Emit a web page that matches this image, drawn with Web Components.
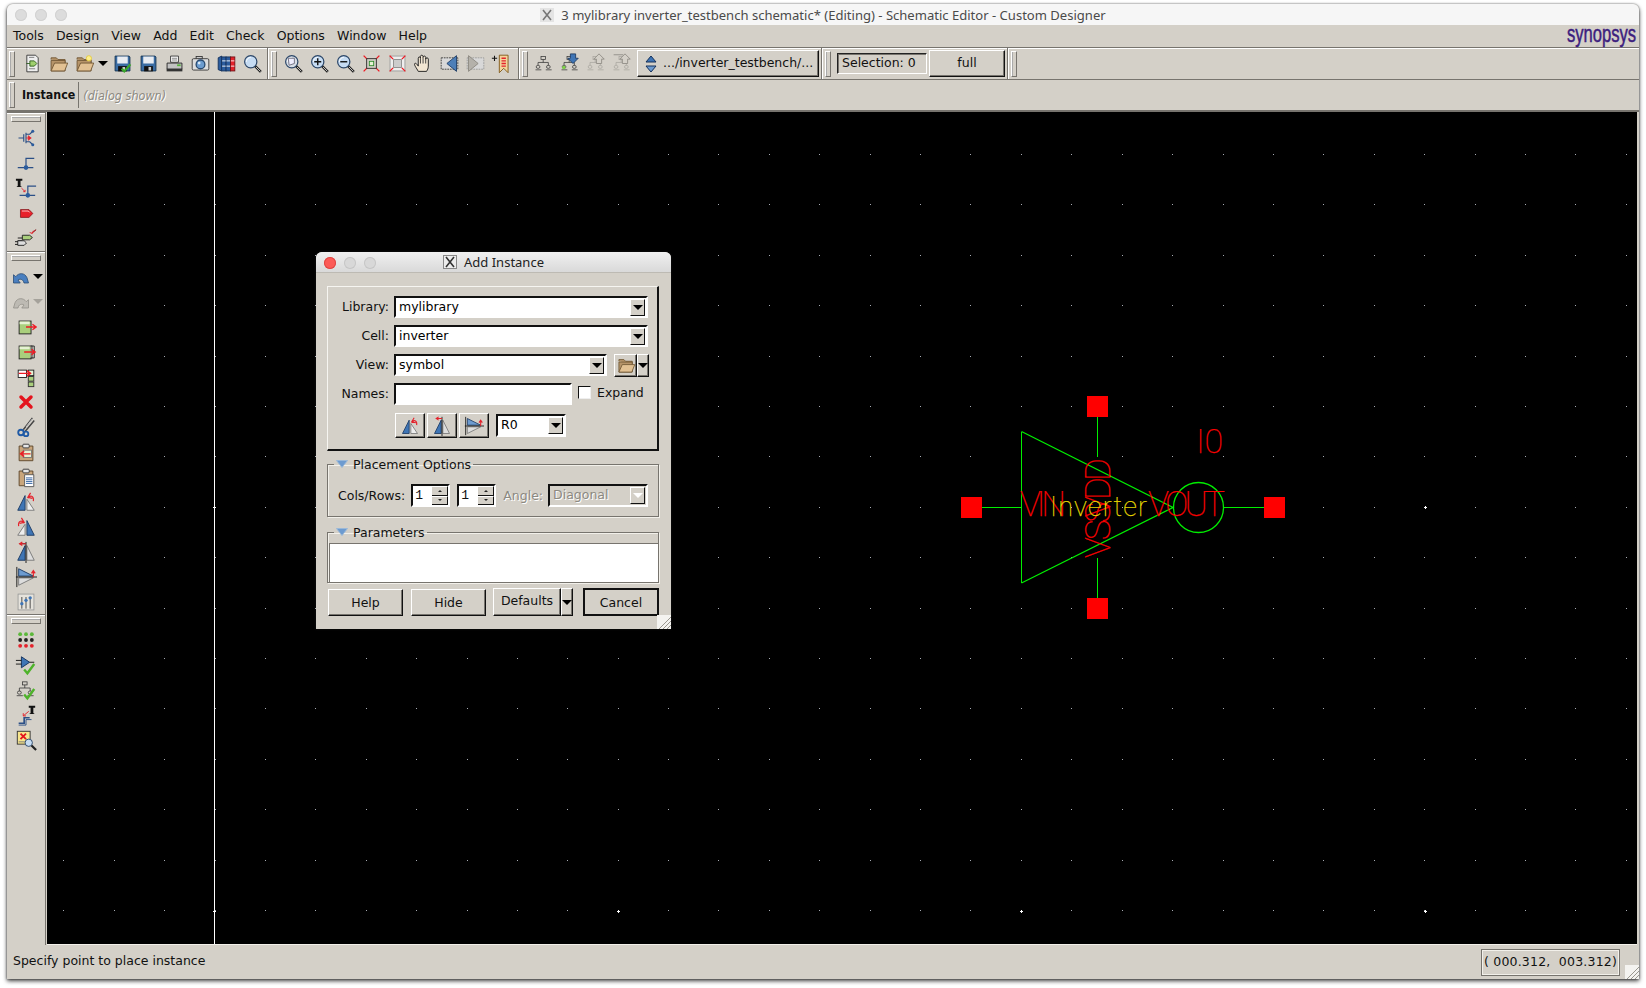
<!DOCTYPE html>
<html>
<head>
<meta charset="utf-8">
<title>Schematic Editor</title>
<style>
  html, body { margin: 0; padding: 0; background: #fff; }
  body { box-sizing: border-box; width: 1646px; height: 988px; padding: 4px 7px 9px; overflow: hidden; }
</style>
</head>
<body>
<eda-window>
  <title-bar>3 mylibrary inverter_testbench schematic* (Editing) - Schematic Editor - Custom Designer</title-bar>
  <menu-bar items="Tools,Design,View,Add,Edit,Check,Options,Window,Help"></menu-bar>
  <tool-bar>
    <tool-handle style="margin:0 4px 0 2px"></tool-handle>
    <tool-icon name="plugdoc"></tool-icon>
    <tool-icon name="folder"></tool-icon>
    <tool-icon name="folderstar"></tool-icon>
    <drop-arrow style="width:12px"></drop-arrow>
    <tool-icon name="savecheck"></tool-icon>
    <tool-icon name="save"></tool-icon>
    <tool-icon name="print"></tool-icon>
    <tool-icon name="camera"></tool-icon>
    <tool-icon name="books"></tool-icon>
    <tool-icon name="find"></tool-icon>
    <tool-split style="margin:0 3px 0 2px"></tool-split>
    <tool-icon name="zoombox"></tool-icon>
    <tool-icon name="zoomin"></tool-icon>
    <tool-icon name="zoomout"></tool-icon>
    <tool-icon name="fit"></tool-icon>
    <tool-icon name="fitred"></tool-icon>
    <tool-icon name="hand"></tool-icon>
    <tool-icon name="back"></tool-icon>
    <tool-icon name="forward"></tool-icon>
    <tool-icon name="bookmark"></tool-icon>
    <tool-split style="margin:0 2px 0 4px"></tool-split>
    <tool-icon name="tree"></tool-icon>
    <tool-icon name="treedown"></tool-icon>
    <tool-icon name="treeup"></tool-icon>
    <tool-icon name="treetop"></tool-icon>
    <hier-combo style="margin-left:3px">.../inverter_testbench/...</hier-combo>
    <tool-split style="margin:0 6px 0 2px"></tool-split>
    <sel-box>Selection: 0</sel-box>
    <flat-button style="width:76px;height:27px;margin-left:2px;padding-bottom:2px">full</flat-button>
    <tool-split style="margin-left:2px"></tool-split>
  </tool-bar>
  <command-bar name="Instance" hint="(dialog shown)"></command-bar>
  <work-area>
    <side-bar slot="side">
      <side-section>
        <tool-icon row name="mos" size="18"></tool-icon>
        <tool-icon row name="wire"></tool-icon>
        <tool-icon row name="wirename"></tool-icon>
        <tool-icon row name="pin" size="17"></tool-icon>
        <tool-icon row name="plugs"></tool-icon>
      </side-section>
      <side-section>
        <side-drop name="undo"></side-drop>
        <side-drop name="redo" disabled></side-drop>
        <tool-icon row name="movein"></tool-icon>
        <tool-icon row name="moveedge"></tool-icon>
        <tool-icon row name="movegroup"></tool-icon>
        <tool-icon row name="del" size="20"></tool-icon>
        <tool-icon row name="cut"></tool-icon>
        <tool-icon row name="pastein"></tool-icon>
        <tool-icon row name="paste"></tool-icon>
        <tool-icon row name="rotl"></tool-icon>
        <tool-icon row name="rotr"></tool-icon>
        <tool-icon row name="flipv"></tool-icon>
        <tool-icon row name="fliph"></tool-icon>
        <tool-icon row name="props" size="20"></tool-icon>
      </side-section>
      <side-section>
        <tool-icon row name="array" size="20"></tool-icon>
        <tool-icon row name="checkplug"></tool-icon>
        <tool-icon row name="checktree"></tool-icon>
        <tool-icon row name="stepname"></tool-icon>
        <tool-icon row name="errorfind"></tool-icon>
      </side-section>
    </side-bar>
    <schematic-canvas>
      <add-instance-dialog></add-instance-dialog>
    </schematic-canvas>
  </work-area>
  <status-bar coords="( 000.312,&#160; 003.312)">Specify point to place instance</status-bar>
</eda-window>

<script>
const BG = '#d4d0c8';
const FONT = '"DejaVu Sans", Verdana, sans-serif';

// small drawing helpers for the icon table
const glass = (extra = '', fill = '#c6dcf3') => `
  <line x1="15" y1="15" x2="21.5" y2="21.5" stroke="#222" stroke-width="3"/>
  <line x1="16" y1="16" x2="21" y2="21" stroke="#d8d8d8" stroke-width="1"/>
  <circle cx="10" cy="10" r="7" fill="${fill}" stroke="#2b4668" stroke-width="1.4"/>
  <path d="M5 10a5 5 0 0 1 5-5" stroke="#fff" fill="none"/>${extra}`;
const floppy = (extra = '') => `
  <path d="M3.5 3.5h16l1 1v16h-17z" fill="#3a6ca3" stroke="#16324f"/>
  <rect x="6" y="4" width="12" height="8" fill="#e8ecf2"/>
  <rect x="7" y="15" width="10" height="6" fill="#111"/>
  <rect x="12" y="16" width="3" height="4" fill="#c8c8c8"/>${extra}`;
const folder = (extra = '') => `
  <path d="M3.5 7.5v-2h6l2 2h8v4" fill="#b69469" stroke="#6f5532"/>
  <path d="M3.5 20.5v-12h16v12z" fill="#b69469" stroke="#6f5532"/>
  <path d="M7.5 11.5h15l-3.500 9h-15.500z" fill="#e2c193" stroke="#6f5532"/>${extra}`;
const tree = (c, extra = '') => `
  <g transform="translate(2 2) scale(.84)" fill="none" stroke="${c}">
    <rect x="8.500" y="2.500" width="6" height="4"/>
    <path d="M11.500 6.500v4M4.500 14.500v-4h14v4"/>
    <rect x="2" y="14.500" width="5" height="4" rx="2"/>
    <rect x="16" y="14.500" width="5" height="4" rx="2"/>
    <path d="M1 20.500h8M15 20.500h8"/>
  </g>${extra}`;
const tri = (l, r) => `
  <path d="M11 5 L3 21 H11z" fill="${l}" stroke="#1c3a63"/>
  <path d="M13 9 V21 H21z" fill="${r}" stroke="#777"/>`;
const box = (x, y, w, h) => `
  <rect x="${x}.500" y="${y}.500" width="${w}" height="${h}" fill="#a9cf7c" stroke="#222"/>
  <rect x="${x + 1}" y="${y + 1}" width="${w - 2}" height="3" fill="#e6f2d4"/>`;
const redArrow = (x1, y, x2) => {
  const d = x2 > x1 ? -4 : 4;
  return `<path d="M${x1} ${y}H${x2}M${x2 + d} ${y - 3}L${x2} ${y}L${x2 + d} ${y + 3}" fill="none" stroke="#ee1c25" stroke-width="1.500"/>`;
};
const corners = `<g stroke="#ee1c25" stroke-width="1.600" fill="none">
  <path d="M3 3l4 4M21 3l-4 4M3 21l4-4M21 21l-4-4"/></g>`;
const check = `<path d="M10 17l3.500 4L21 11" fill="none" stroke="#4eb32a" stroke-width="2.600"/>`;
const clip = `
  <path d="M4.500 5.500h15v16h-15z" fill="#c9a67c" stroke="#5b4428"/>
  <rect x="8.500" y="3.500" width="7" height="4" rx="1" fill="#e6e6e6" stroke="#333"/>`;
const T = `<path d="M15 2h7v2h-2v6h1v1h-5v-1h1V4h-2z" fill="#111"/>`;
const wire = (dy = 0, dx = 0) => `<g transform="translate(${dx} ${dy})">
  <path d="M3 16H20M12 16V6H21" fill="none" stroke="#2b4f86" stroke-width="1.300"/>
  <circle cx="12" cy="16" r="2.500" fill="#2b5c9e"/></g>`;

const ICONS = {
  plugdoc: `<path d="M5.500 2.500h10l3 3v16h-13z" fill="#eee" stroke="#333"/>
    <path d="M5 12h4v-3h5l3 3-3 3H9v-3" fill="#9fd06e" stroke="#2c5c1c"/><path d="M8 5h6M8 18h7" stroke="#777"/>`,
  folder: folder(),
  folderstar: folder(`<circle cx="17" cy="6" r="3" fill="#ffef8a" stroke="#e2c93f"/>`),
  savecheck: floppy(`<path d="M11 18l3 3 7-8" fill="none" stroke="#39a72a" stroke-width="2.600"/>`),
  save: floppy(),
  print: `<path d="M7.500 3.500h9v7h-9z" fill="#fff" stroke="#333"/><path d="M9 6h6M9 8h6" stroke="#777"/>
    <path d="M3.500 11.500h17v7h-17z" fill="#c2c2c2" stroke="#222"/>
    <rect x="3" y="18" width="18" height="3" fill="#333"/><rect x="15" y="13" width="4" height="2" fill="#55b33a"/>`,
  camera: `<rect x="7" y="4" width="7" height="3" fill="#ccc" stroke="#333"/>
    <rect x="2.500" y="6.500" width="19" height="13" rx="1.500" fill="#ddd" stroke="#333"/>
    <circle cx="12" cy="13" r="5" fill="#6c9ccf" stroke="#28496f" stroke-width="1.500"/><circle cx="10.500" cy="11.500" r="1.500" fill="#dbeaf8"/>`,
  books: `<path d="M2.500 5.500l4-2v17l-4-1.500z" fill="#2b5c9e" stroke="#14305a"/>
    <rect x="6.500" y="4.500" width="5" height="16" fill="#2b5c9e" stroke="#14305a"/>
    <rect x="11.500" y="4.500" width="5" height="16" fill="#2b5c9e" stroke="#14305a"/>
    <rect x="16.500" y="4.500" width="5" height="16" fill="#e4222b" stroke="#701015"/>
    <path d="M7 9h4M7 15h4M12 9h4M12 15h4M17 9h4M17 15h4" stroke="#fff"/>`,
  find: glass(),
  zoombox: glass(`<path d="M6 6h7v6l-6 2z" fill="#eef" stroke="#667"/>`, '#d6dde6'),
  zoomin: glass(`<path d="M6 10h8M10 6v8" stroke="#111" stroke-width="1.600"/>`),
  zoomout: glass(`<path d="M6 10h8" stroke="#111" stroke-width="1.600"/>`),
  fit: `${corners}<rect x="6.500" y="6.500" width="11" height="11" fill="#d4d0c8" stroke="#222"/>
    <rect x="9.500" y="9.500" width="5" height="5" fill="#e6f2d4" stroke="#2a8a2a"/>`,
  fitred: `<rect x="3.500" y="3.500" width="17" height="17" fill="#eee" stroke="#999"/>${corners}
    <rect x="7.500" y="7.500" width="9" height="9" fill="#ccc" stroke="#888"/>`,
  hand: `<path d="M6 21c-2-4-5-7-4-9 1-1 3 1 4 3V6c0-2 2.500-2 2.500 0V4c0-2 3-2 3 0v1c0-2 3-2 3 0v2c0-2 3-2 3 0v8c0 3-1 4-2 6z"
    fill="#f2e6d2" stroke="#222" stroke-width="1.100"/><path d="M8.500 6v6M11.500 5v7M14.500 6v6" stroke="#333" fill="none"/>`,
  back: `<rect x="2.500" y="5.500" width="19" height="13" fill="#d8d8d8" stroke="#333" stroke-dasharray="2 1"/>
    <path d="M20 3v18L9 12z" fill="#4d7fb8" stroke="#1c3a63"/>`,
  forward: `<rect x="2.500" y="5.500" width="19" height="13" fill="#d8d8d8" stroke="#999" stroke-dasharray="2 1"/>
    <path d="M4 3v18l11-9z" fill="#b4b1aa" stroke="#8a877f"/>`,
  bookmark: `<path d="M1 6h6M4 3v6" stroke="#111" stroke-width="1.200"/>
    <path d="M9.500 2.500h10v20l-5-5-5 5z" fill="#f3d49b" stroke="#7a5414"/>
    <path d="M12 6h5M12 9h5M12 12h5M12 15h5" stroke="#e4222b" stroke-width="1.500"/>`,
  tree: tree('#333'),
  treedown: tree('#333', `<path d="M13 1h6v5h3l-6 6-6-6h3z" fill="#3f75b5" stroke="#1c3a63"/><rect x="3.500" y="14.500" width="4" height="4" rx="2" fill="#7ed04b"/>`),
  treeup: tree('#a8a59e', `<path d="M13 12h6V7h3l-6-6-6 6h3z" fill="#d4d0c8" stroke="#8f8c85"/>`),
  treetop: tree('#a8a59e', `<path d="M13 12h6V7h3l-6-6-6 6h3z" fill="#d4d0c8" stroke="#8f8c85"/><path d="M3 2h11" stroke="#8f8c85"/>`),
  mos: `<path d="M2 12h7M9 7v10M12 5v14M12 7h5l4-4M12 17h5l4 4" fill="none" stroke="#2b4f86" stroke-width="1.500"/>
    <path d="M12 12h5M15 9l4 3-4 3z" fill="#e4222b" stroke="#e4222b"/><circle cx="21" cy="3" r="2" fill="#2b5c9e"/><circle cx="21" cy="21" r="2" fill="#2b5c9e"/>`,
  wire: wire(1),
  wirename: `${wire(4, 2)}${T.replace('<path', '<path transform="translate(-14 0)"')}<path d="M7 12l4 4M9 16h2v-2" stroke="#e4222b" fill="none"/>`,
  pin: `<path d="M3.500 6.500h12l5.500 5.500-5.500 5.500h-12z" fill="#e8202a" stroke="#7a0f14"/><path d="M5.500 8.500h9l2 2" stroke="#fff" fill="none"/>`,
  plugs: `<path d="M8 9h8l3 2.500-3 2.500H8z" fill="#a9cf7c" stroke="#222"/><path d="M3 12h5M3 15h5M19 6l4-3" stroke="#111"/>
    <path d="M3 15h7l2.500 2.500L10 20H3z" fill="#ddd" stroke="#222"/><path d="M16 6l3 1 1-3M23 3l-5 4" stroke="#e4222b" fill="none"/><path d="M0 16h3M0 19h3" stroke="#111"/>`,
  undo: `<path d="M2 20V9l3 2.500C9 6 17 6 20 13l2 7h-6c-1-5-5-6-8-4l3 4z" fill="#4a7fbf" stroke="#23466f"/>`,
  redo: `<path d="M22 20V9l-3 2.500C15 6 7 6 4 13l-2 7h6c1-5 5-6 8-4l-3 4z" fill="#bdbab3" stroke="#8f8c85"/>`,
  movein: `${box(4, 5, 13, 14)}${redArrow(12, 12, 23)}`,
  moveedge: `${box(4, 5, 13, 14)}<path d="M18.500 5v14M17 5.500h4v13h-4" stroke="#222" fill="#d4d0c8"/>${redArrow(10, 12, 22)}`,
  movegroup: `<rect x="3.500" y="4.500" width="9" height="8" fill="#fff" stroke="#222"/><rect x="14.500" y="4.500" width="6" height="6" fill="#e6f2d4" stroke="#222"/>
    <rect x="14.500" y="11.500" width="6" height="5" fill="#a9cf7c" stroke="#333"/><rect x="14.500" y="17.500" width="6" height="5" fill="#a9cf7c" stroke="#333"/>${redArrow(4, 8, 17)}`,
  del: `<path d="M6 6l12 12M18 6L6 18" stroke="#e4141d" stroke-width="4.200" stroke-linecap="round"/>`,
  cut: `<path d="M19 2L9 15M21 5L11 17" stroke="#444" stroke-width="1.600"/><path d="M19 3l-7 9" stroke="#ccc"/>
    <circle cx="6.500" cy="18" r="3" fill="none" stroke="#1f5aa5" stroke-width="2"/><circle cx="12" cy="19.500" r="2.500" fill="none" stroke="#1f5aa5" stroke-width="2"/>`,
  pastein: `${clip}<rect x="9" y="10" width="9" height="8" fill="#e6f2d4" stroke="#777"/>${redArrow(17, 14, 6)}`,
  paste: `${clip}<path d="M10.500 9.500h10v13h-10z" fill="#fff" stroke="#555"/><path d="M12 13h7M12 15h7M12 17h7M12 19h7" stroke="#2b5c9e"/>`,
  rotl: `${tri('#3f75b5', '#eeeeee')}<path d="M14 8c2-4 7-3 6 3M17 2l-3 5 5 1" fill="none" stroke="#e4222b" stroke-width="1.300"/>`,
  rotr: `<g transform="matrix(-1 0 0 1 24 0)">${tri('#3f75b5', '#eeeeee')}</g><path d="M10 8C8 4 3 5 4 11M7 2l3 5-5 1" fill="none" stroke="#e4222b" stroke-width="1.300"/>`,
  flipv: `<path d="M11 5L3 21h8z" fill="#3f75b5" stroke="#1c3a63"/><path d="M13 5l8 16h-8z" fill="#ddd" stroke="#777"/>
    <path d="M12 1v23M12 3H5" stroke="#111"/><path d="M5 3h7M8 1L5 3l3 2" fill="none" stroke="#e4222b" stroke-width="1.300"/>`,
  fliph: `<path d="M4 3l16 8H4z" fill="#6d9bd0" stroke="#1c3a63"/><path d="M4 13h16L4 21z" fill="#ddd" stroke="#777"/>
    <path d="M1 12h23M2 1v22" stroke="#111"/><path d="M20 12V5M18 8l2-3 2 3" fill="none" stroke="#e4222b" stroke-width="1.300"/>`,
  props: `<rect x="2.500" y="2.500" width="19" height="19" fill="#e6e3dc" stroke="#999"/>
    <path d="M7 6v14M12 6v14M17 6v14" stroke="#333"/><circle cx="7" cy="14" r="2" fill="#3f75b5"/><circle cx="12" cy="10" r="2" fill="#3f75b5"/><circle cx="17" cy="7" r="2" fill="#3f75b5"/>`,
  array: [5, 12, 19].map((x, i) => [5, 12, 19].map((y, j) =>
    `<circle cx="${x}" cy="${y}" r="2.300" fill="${j == 0 ? '#5bb83a' : j == 1 ? '#222' : '#e4222b'}"/>`).join('')).join(''),
  checkplug: `<path d="M7 3v12l9-6z" fill="#3f75b5" stroke="#14305a"/><path d="M1 7h6M1 11h6M16 9h5" stroke="#111"/>${check}`,
  checktree: `<g transform="translate(-1 -1)">${tree('#333')}</g>${check}`,
  stepname: `<path d="M4 21h6v-6h6" fill="none" stroke="#2b4f86" stroke-width="1.800"/><path d="M4 23h8v-6h6" fill="none" stroke="#2b4f86" stroke-width="1"/>${T}<path d="M15 8l-6 5M9 10v3h3" stroke="#e4222b" fill="none"/>`,
  errorfind: `<rect x="2.500" y="2.500" width="14" height="14" fill="#f6e58c" stroke="#333"/><path d="M6 5l6 6M12 5l-6 6" stroke="#e4141d" stroke-width="2"/>
    <path d="M4 14h12" stroke="#777"/><circle cx="15" cy="15" r="4" fill="#c6dcf3" stroke="#2b4668"/><line x1="18" y1="18" x2="23" y2="23" stroke="#222" stroke-width="2.400"/>`
};

class ToolIcon extends HTMLElement {
  connectedCallback() {
    const root = this.shadowRoot || this.attachShadow({mode: 'open'});
    const row = this.hasAttribute('row');
    const size = this.getAttribute('size') || (row ? 22 : 21);
    root.innerHTML = `
      <style>
        :host { display: flex; flex: 0 0 auto; align-items: center; justify-content: center;
                width: ${row ? '38px' : '26px'}; height: ${row ? '25px' : '26px'}; }
        svg { width: ${size}px; height: ${size}px; display: block; }
      </style>
      <svg viewBox="0 0 24 24">${ICONS[this.getAttribute('name')] || ''}</svg>`;
  }
}

class EdaWindow extends HTMLElement {
  constructor() {
    super();
    this.attachShadow({mode: 'open'}).innerHTML = `
      <style>
        :host { display: flex; flex-direction: column; height: 975px; background: ${BG}; color: #111;
                font: 12.5px ${FONT}; border-radius: 6px 6px 0 0;
                box-shadow: 0 2px 4px rgba(0,0,0,.75), 0 0 2px rgba(0,0,0,.55); }
      </style><slot></slot>`;
  }
}

class TitleBar extends HTMLElement {
  constructor() {
    super();
    this.attachShadow({mode: 'open'}).innerHTML = `
      <style>
        :host { display: flex; flex: 0 0 auto; height: 21px; align-items: center; justify-content: center;
                position: relative; background: #f6f6f6; border-radius: 6px 6px 0 0; color: #4a4a4a;
                font: 13.05px "Noto Sans", "Open Sans", sans-serif; }
        .lights { position: absolute; left: 8px; top: 5px; display: flex; gap: 8px; }
        .lights i { width: 12px; height: 12px; border-radius: 50%; background: #dcdcdc; box-shadow: inset 0 0 0 1px #d2d2d2; }
        svg { width: 14px; height: 14px; margin-right: 7px; }
      </style>
      <div class="lights"><i></i><i></i><i></i></div>
      <svg viewBox="0 0 14 14"><rect width="14" height="14" fill="#e4e4e4"/><path d="M3 2l8 10M11 2L3 12" stroke="#777" stroke-width="1.600"/></svg>
      <span><slot></slot></span>`;
  }
}

class MenuBar extends HTMLElement {
  connectedCallback() {
    const items = this.getAttribute('items').split(',').map(t => `<span>${t}</span>`).join('');
    this.attachShadow({mode: 'open'}).innerHTML = `
      <style>
        :host { display: flex; flex: 0 0 auto; height: 22px; align-items: center; padding: 0 3px 2px 6px; box-sizing: border-box; }
        nav { display: flex; gap: 12.200px; }
        .logo { margin-left: auto; width: 69px; color: #3c1d7e; font: 24px/22px "Liberation Sans", sans-serif;
                white-space: nowrap; transform: scaleX(.69); transform-origin: left center; -webkit-text-stroke: .5px #3c1d7e; margin-top: -2px; }
      </style>
      <nav>${items}</nav><span class="logo">synopsys</span>`;
  }
}

class ToolBar extends HTMLElement {
  constructor() {
    super();
    this.attachShadow({mode: 'open'}).innerHTML = `
      <style>
        :host { display: flex; flex: 0 0 auto; height: 33px; box-sizing: border-box; align-items: center;
                border-top: 1px solid #77746e; box-shadow: inset 0 1px 0 #fff; border-bottom: 1px solid #77746e; }
      </style><slot></slot>`;
  }
}

class ToolHandle extends HTMLElement {
  constructor() {
    super();
    this.attachShadow({mode: 'open'}).innerHTML = `
      <style>
        :host { display: block; flex: 0 0 auto; width: 6px; height: 26px; box-sizing: border-box; background: ${BG};
                border: 1px solid #77746e; border-top-color: #fff; border-left-color: #fff;
                box-shadow: inset 1px 0 0 #aaa; }
      </style>`;
  }
}

class ToolSplit extends HTMLElement {
  constructor() {
    super();
    this.attachShadow({mode: 'open'}).innerHTML = `
      <style>
        :host { display: flex; flex: 0 0 auto; height: 31px; align-items: center; }
        .line { width: 1px; height: 100%; background: #77746e; border-right: 1px solid #fff; margin-right: 1px; }
        tool-handle { margin-left: 1px; }
      </style>
      <div class="line"></div><tool-handle></tool-handle>`;
  }
}

class DropArrow extends HTMLElement {
  constructor() {
    super();
    this.attachShadow({mode: 'open'}).innerHTML = `
      <style>
        :host { display: flex; flex: 0 0 auto; align-items: center; justify-content: center; }
        i { border: 5px solid transparent; border-top: 5px solid var(--arrow, #000); border-bottom: 0; }
      </style><i></i>`;
  }
}

class HierCombo extends HTMLElement {
  constructor() {
    super();
    this.attachShadow({mode: 'open'}).innerHTML = `
      <style>
        :host { display: flex; flex: 0 0 auto; width: 182px; height: 27px; box-sizing: border-box; align-items: center; gap: 6px;
                padding-left: 7px; border: 1px solid; border-color: #fff #111 #111 #fff; box-shadow: inset -1px -1px 0 #77746e; white-space: nowrap; }
        span { padding-bottom: 3px; }
      </style>
      <svg width="12" height="18" viewBox="0 0 12 18"><path d="M6 1l5 6H1z" fill="#3f75b5" stroke="#14305a"/><path d="M6 17l5-6H1z" fill="#6d9bd0" stroke="#14305a"/></svg>
      <span><slot></slot></span>`;
  }
}

class SelBox extends HTMLElement {
  constructor() {
    super();
    this.attachShadow({mode: 'open'}).innerHTML = `
      <style>
        :host { display: flex; flex: 0 0 auto; width: 90px; height: 21px; box-sizing: border-box; align-items: center; padding-left: 4px;
                border: 1px solid; border-color: #222 #fff #fff #222; box-shadow: inset 1px 1px 0 #77746e; padding-bottom: 3px; }
      </style><slot></slot>`;
  }
}

class FlatButton extends HTMLElement {
  constructor() {
    super();
    this.attachShadow({mode: 'open'}).innerHTML = `
      <style>
        :host { display: flex; flex: 0 0 auto; align-items: center; justify-content: center; box-sizing: border-box; background: ${BG};
                border: 1px solid; border-color: #fff #111 #111 #fff; box-shadow: inset -1px -1px 0 #77746e; }
        :host([default]) { border: 2px solid #111; border-color: #111 #111 #111 #111; box-shadow: none; }
      </style><slot></slot>`;
  }
}

class CommandBar extends HTMLElement {
  connectedCallback() {
    this.attachShadow({mode: 'open'}).innerHTML = `
      <style>
        :host { display: flex; flex: 0 0 auto; height: 32px; box-sizing: border-box; align-items: center; border-bottom: 2px solid #77746e; }
        tool-handle { margin: 0 7px 0 2px; }
        b { font: bold 12.3px "DejaVu Sans Condensed", ${FONT}; padding-right: 3px; border-right: 1px solid #77746e; line-height: 26px; }
        em { font: oblique 12.5px "DejaVu Sans Condensed", ${FONT}; margin-left: 4px; color: #8c8981; text-shadow: 1px 1px 0 #fff; }
      </style>
      <tool-handle></tool-handle><b>${this.getAttribute('name')}</b><em>${this.getAttribute('hint')}</em>`;
  }
}

class WorkArea extends HTMLElement {
  constructor() {
    super();
    this.attachShadow({mode: 'open'}).innerHTML = `
      <style>
        :host { display: flex; flex: 1 1 auto; min-height: 0; padding-right: 2px; }
      </style><slot name="side"></slot><slot></slot>`;
  }
}

class SideBar extends HTMLElement {
  constructor() {
    super();
    this.attachShadow({mode: 'open'}).innerHTML = `
      <style>
        :host { display: flex; flex-direction: column; flex: 0 0 auto; width: 38px; margin-right: 1px;
                border-right: 1px solid #77746e; }
      </style><slot></slot>`;
  }
}

class SideSection extends HTMLElement {
  constructor() {
    super();
    this.attachShadow({mode: 'open'}).innerHTML = `
      <style>
        :host { display: flex; flex-direction: column; flex: 0 0 auto; }
        .head { height: 13.500px; box-sizing: border-box; padding: 3px 4px 0; border-top: 1px solid #77746e; box-shadow: inset 0 1px 0 #fff; }
        .head i { display: block; height: 6px; box-sizing: border-box; border: 1px solid; border-color: #fff #77746e #77746e #fff; box-shadow: inset 0 1px 0 #aaa; }
      </style>
      <div class="head"><i></i></div><slot></slot>`;
  }
}

class SideDrop extends HTMLElement {
  connectedCallback() {
    const off = this.hasAttribute('disabled');
    this.attachShadow({mode: 'open'}).innerHTML = `
      <style>
        :host { display: flex; height: 25px; align-items: center; padding-left: 2px; --arrow: ${off ? '#a5a29b' : '#000'}; }
        tool-icon { width: 24px; }
        drop-arrow { width: 8px; margin-left: 1px; }
      </style>
      <tool-icon name="${this.getAttribute('name')}" size="18"></tool-icon><drop-arrow></drop-arrow>`;
  }
}

class SchematicCanvas extends HTMLElement {
  connectedCallback() {
    const dots = [];
    for (let i = 0; i < 32; i++) {
      for (let j = 0; j < 16; j++) {
        const x = Math.round(63.3 + 50.4 * i), y = Math.round(154 + 50.4 * j);
        dots.push(`<rect x="${x}" y="${y}" width="1" height="1" fill="#a8acb4"/>`);
      }
    }
    const major = [[214, 507], [214, 911], [618, 911], [1021, 911], [1425, 911], [1425, 507]]
      .map(([x, y]) => `<path d="M${x - 1} ${y}.5h3M${x + .5} ${y - 1}v3" stroke="#fff"/>`).join('');
    const pad = (x, y) => `<rect x="${x}" y="${y}" width="21" height="21" fill="#ff0000"/>`;
    const thin = `font-family="Roboto" font-weight="100" lengthAdjust="spacingAndGlyphs"`;
    this.attachShadow({mode: 'open'}).innerHTML = `
      <style>
        :host { display: block; flex: 1 1 auto; position: relative; background: #000; border-bottom: 1px solid #f2f0ea; overflow: hidden; }
        svg { position: absolute; left: 0; top: 0; display: block; }
        ::slotted(*) { position: absolute; left: 269px; top: 140px; }
      </style>
      <svg width="1590" height="832" viewBox="47 112 1590 832" shape-rendering="crispEdges">
        ${dots.join('')}
        <rect x="214" y="112" width="1" height="832" fill="#fff"/>
        ${major}
        <g fill="none" stroke="#00ee00" stroke-width="1">
          <path d="M982 507.500H1021M1097.500 417V457M1097.500 558V598M1224 507.500H1264M1021.500 431.500V583" />
          <g shape-rendering="auto">
            <path d="M1021.500 431.500L1173 507.500L1021.500 583" stroke-width="1.300"/>
            <circle cx="1198.500" cy="507.500" r="25" stroke-width="1.300"/>
          </g>
        </g>
        ${pad(1087, 396)}${pad(1087, 598)}${pad(961, 497)}${pad(1264, 497)}
        <g shape-rendering="auto" fill="#ff0000" stroke="#ff0000" stroke-width=".25" ${thin}>
          <text x="1020" y="516" font-size="35" textLength="46">VIN</text>
          <text x="1148" y="516" font-size="35" textLength="77">VOUT</text>
          <text x="1196" y="453" font-size="34" textLength="27">I0</text>
          <text transform="translate(1110 558) rotate(-90)" font-size="35" textLength="56">VSS</text>
          <text transform="translate(1110 517) rotate(-90)" font-size="35" textLength="59">VDD</text>
          <text x="1050" y="516" font-size="27" textLength="97" fill="#e6d800" stroke="#e6d800">Inverter</text>
        </g>
      </svg>
      <slot></slot>`;
  }
}

class StatusBar extends HTMLElement {
  connectedCallback() {
    this.attachShadow({mode: 'open'}).innerHTML = `
      <style>
        :host { display: flex; flex: 0 0 auto; height: 34px; align-items: center; padding-left: 6px; position: relative; }
        .msg { padding-bottom: 3px; }
        .coords { margin-left: auto; margin-right: 19px; width: 139px; height: 27px; box-sizing: border-box; display: flex; align-items: center; justify-content: center;
                  border: 1px solid #77746e; box-shadow: inset 0 0 0 1px #f2f0ea; white-space: nowrap; padding-bottom: 2px; letter-spacing: .2px; }
        size-grip { position: absolute; right: 0; bottom: 0; }
      </style>
      <span class="msg"><slot></slot></span><span class="coords">${this.getAttribute('coords')}</span><size-grip></size-grip>`;
  }
}

class SizeGrip extends HTMLElement {
  constructor() {
    super();
    this.attachShadow({mode: 'open'}).innerHTML = `
      <style>:host { display: block; width: 14px; height: 14px; }</style>
      <svg width="14" height="14" viewBox="0 0 14 14"><rect width="14" height="14" fill="#f4f3f0"/><path d="M2 14L14 2M6 14l8-8M10 14l4-4" stroke="#9a978f"/></svg>`;
  }
}

class QtCombo extends HTMLElement {
  connectedCallback() {
    const off = this.hasAttribute('disabled');
    this.attachShadow({mode: 'open'}).innerHTML = `
      <style>
        :host { display: flex; flex: 0 0 auto; box-sizing: border-box; height: 22px; align-items: center; background: ${off ? BG : '#fff'};
                color: ${off ? '#8c8981' : '#000'}; border: 2px solid; border-color: #111 #fff #fff #111; --arrow: ${off ? '#fff' : '#000'}; }
        span { flex: 1; padding: 0 0 2px 3px; ${off ? 'text-shadow: 1px 1px 0 #fff;' : ''} }
        .btn { width: 15px; height: 17px; box-sizing: border-box; background: ${BG}; margin-right: 1px;
               border: 1px solid; border-color: #fff #111 #111 #fff; }
        drop-arrow { height: 100%; }
      </style>
      <span>${this.getAttribute('value')}</span><div class="btn"><drop-arrow></drop-arrow></div>`;
  }
}

class QtSpin extends HTMLElement {
  connectedCallback() {
    this.attachShadow({mode: 'open'}).innerHTML = `
      <style>
        :host { display: flex; flex: 0 0 auto; width: 39px; height: 23px; box-sizing: border-box; background: #fff;
                border: 2px solid; border-color: #111 #fff #fff #111; align-items: center; }
        span { flex: 1; padding-left: 2px; font-family: "Liberation Mono", monospace; font-size: 13px; }
        .arrows { width: 16px; height: 100%; display: flex; flex-direction: column; }
        .arrows i { flex: 1; display: flex; align-items: center; justify-content: center; background: ${BG}; border-bottom: 1px solid #111; border-top: 1px solid #fff; border-right: 1px solid #111; }
        .arrows b { border: 2px solid transparent; border-bottom: 2px solid #222; border-top: 0; }
        .arrows i + i b { transform: rotate(180deg); }
      </style>
      <span>${this.getAttribute('value')}</span><div class="arrows"><i><b></b></i><i><b></b></i></div>`;
  }
}

class QtGroup extends HTMLElement {
  connectedCallback() {
    this.attachShadow({mode: 'open'}).innerHTML = `
      <style>
        :host { display: block; flex: 0 0 auto; }
        fieldset { margin: 0; padding: 0; border: 1px solid #77746e; box-shadow: inset 1px 1px 0 #f2f0ea, 1px 1px 0 #f2f0ea; min-width: 0; display: block; }
        legend { display: flex; align-items: center; gap: 5px; margin-left: 6px; padding: 0 2px; height: 16px; }
        .content { padding: var(--pad, 12px 10px 9px); }
        svg { display: block; }
      </style>
      <fieldset>
        <legend><svg width="12" height="8" viewBox="0 0 12 8"><path d="M0.500 0.500h11L6 7.500z" fill="#6d9bd0" stroke="#9ab8d8"/></svg>${this.getAttribute('label')}</legend>
        <div class="content"><slot></slot></div>
      </fieldset>`;
  }
}

class AddInstanceDialog extends HTMLElement {
  connectedCallback() {
    const iconBtn = n => `<flat-button style="width:30px;height:25px"><tool-icon name="${n}" size="20" style="width:24px;height:22px"></tool-icon></flat-button>`;
    this.attachShadow({mode: 'open'}).innerHTML = `
      <style>
        :host { display: flex; flex-direction: column; width: 355px; height: 377px; background: ${BG}; color: #111;
                border-radius: 6px 6px 0 0; box-shadow: 0 0 3px rgba(255,255,255,.08); }
        .title { flex: 0 0 auto; height: 21px; display: flex; align-items: center; justify-content: center; position: relative;
                 background: linear-gradient(#f0f0f0, #d9d9d9); border-radius: 6px 6px 0 0; color: #222;
                 font: 13px "Noto Sans", sans-serif; border-bottom: 1px solid #bdbab3; box-sizing: border-box; }
        .title svg { width: 14px; height: 14px; margin-right: 7px; }
        .lights { position: absolute; left: 8px; top: 5px; display: flex; gap: 8px; }
        .lights i { width: 12px; height: 12px; border-radius: 50%; background: #d8d8d8; box-shadow: inset 0 0 0 1px #c6c6c6; }
        .lights i:first-child { background: #fc5b57; box-shadow: inset 0 0 0 1px #df4744; }
        .body { flex: 1; padding: 13px 12px 0 11px; display: flex; flex-direction: column; position: relative; }
        .main { height: 165px; box-sizing: border-box; padding: 9px 0 0; display: flex; flex-direction: column; flex: 0 0 auto;
                border: 1px solid; border-width: 1px 2px 2px 1px; border-color: #f6f5f1 #111 #111 #f6f5f1; }
        .row { display: flex; align-items: center; height: 22px; margin-bottom: 7px; flex: 0 0 auto; }
        .row label { width: 61px; text-align: right; margin-right: 5px; flex: 0 0 auto; padding-bottom: 2px; }
        .input { width: 178px; height: 22px; box-sizing: border-box; border: 2px solid; border-color: #111 #fff #fff #111; background: #fff; }
        .check { width: 13px; height: 13px; box-sizing: border-box; background: #fff; border: 1px solid; border-color: #111 #eee #eee #111; margin: -3px 6px 0; }
        .expand { margin-top: -4px; }
        .orient { display: flex; align-items: center; gap: 2px; padding-left: 67px; height: 25px; margin-top: 1px; }
        .folder { display: flex; margin-left: 7px; }
        .folder flat-button:last-child { width: 12px; height: 23px; }
        .place { display: flex; align-items: center; height: 23px; }
        .place .lbl { margin-right: 6px; }
        .dis { color: #8c8981; text-shadow: 1px 1px 0 #fff; margin: 0 5px 0 7px; }
        qt-group.p { margin-top: 5px; }
        qt-group.q { margin-top: 7px; --pad: 3px 0 0 1px; }
        .white { height: 38px; background: #fff; border-top: 1px solid #77746e; border-left: 1px solid #77746e; }
        .btns { display: flex; align-items: flex-end; height: 28px; margin: 5px 0 0 1px; }
        size-grip { position: absolute; right: 0; bottom: 0; }
      </style>
      <div class="title">
        <div class="lights"><i></i><i></i><i></i></div>
        <svg viewBox="0 0 14 14"><rect x=".5" y=".5" width="13" height="13" fill="#ececec" stroke="#888"/><path d="M3 2l8 10M11 2L3 12" stroke="#333" stroke-width="1.600"/></svg>
        Add Instance
      </div>
      <div class="body">
        <div class="main">
          <div class="row"><label>Library:</label><qt-combo value="mylibrary" style="width:254px"></qt-combo></div>
          <div class="row"><label>Cell:</label><qt-combo value="inverter" style="width:254px"></qt-combo></div>
          <div class="row"><label>View:</label><qt-combo value="symbol" style="width:213px"></qt-combo>
            <div class="folder">
              <flat-button style="width:23px;height:23px"><tool-icon name="folder" size="20" style="width:22px;height:22px"></tool-icon></flat-button>
              <flat-button><drop-arrow></drop-arrow></flat-button>
            </div>
          </div>
          <div class="row"><label>Names:</label><div class="input"></div><div class="check"></div><span class="expand">Expand</span></div>
          <div class="orient">
            ${iconBtn('rotl')}${iconBtn('flipv')}${iconBtn('fliph')}
            <qt-combo value="R0" style="width:70px;height:23px;margin-left:5px"></qt-combo>
          </div>
        </div>
        <qt-group class="p" label="Placement Options">
          <div class="place">
            <span class="lbl">Cols/Rows:</span>
            <qt-spin value="1"></qt-spin><qt-spin value="1" style="margin-left:7px"></qt-spin>
            <span class="dis">Angle:</span>
            <qt-combo disabled value="Diagonal" style="width:100px;height:23px"></qt-combo>
          </div>
        </qt-group>
        <qt-group class="q" label="Parameters"><div class="white"></div></qt-group>
        <div class="btns">
          <flat-button style="width:75px;height:27px">Help</flat-button>
          <flat-button style="width:75px;height:27px;margin-left:8px">Hide</flat-button>
          <flat-button style="width:68px;height:28px;margin-left:7px;padding-bottom:3px">Defaults</flat-button>
          <flat-button style="width:12px;height:28px"><drop-arrow></drop-arrow></flat-button>
          <flat-button default style="width:76px;height:28px;margin-left:10px">Cancel</flat-button>
        </div>
        <size-grip></size-grip>
      </div>`;
  }
}

customElements.define('tool-icon', ToolIcon);
customElements.define('eda-window', EdaWindow);
customElements.define('title-bar', TitleBar);
customElements.define('menu-bar', MenuBar);
customElements.define('tool-bar', ToolBar);
customElements.define('tool-handle', ToolHandle);
customElements.define('tool-split', ToolSplit);
customElements.define('drop-arrow', DropArrow);
customElements.define('hier-combo', HierCombo);
customElements.define('sel-box', SelBox);
customElements.define('flat-button', FlatButton);
customElements.define('command-bar', CommandBar);
customElements.define('work-area', WorkArea);
customElements.define('side-bar', SideBar);
customElements.define('side-section', SideSection);
customElements.define('side-drop', SideDrop);
customElements.define('schematic-canvas', SchematicCanvas);
customElements.define('status-bar', StatusBar);
customElements.define('size-grip', SizeGrip);
customElements.define('qt-combo', QtCombo);
customElements.define('qt-spin', QtSpin);
customElements.define('qt-group', QtGroup);
customElements.define('add-instance-dialog', AddInstanceDialog);
</script>
</body>
</html>
